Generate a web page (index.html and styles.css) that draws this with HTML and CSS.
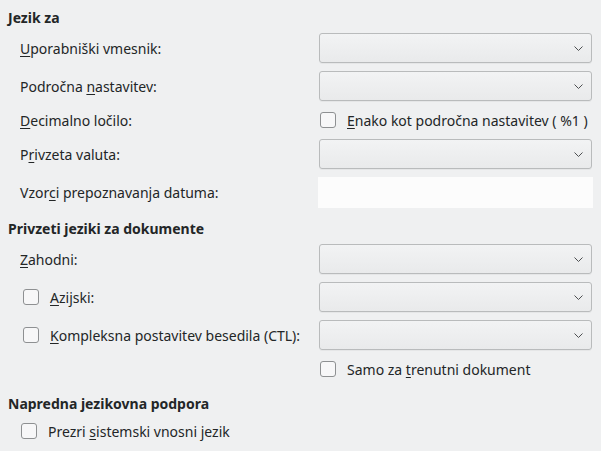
FILE: index.html
```html
<!DOCTYPE html>
<html lang="sl">
<head>
<meta charset="utf-8">
<link rel="stylesheet" href="styles.css">
</head>
<body>
<div class="page">
  <section class="section first">
    <h2 class="head">Jezik za</h2>
    <div class="grid">
      <div class="label"><span><u>U</u>porabniški vmesnik:</span></div>
      <div class="combo"><svg class="chev" width="9" height="5" viewBox="0 0 9 5"><polyline points="0.5,0.5 4.5,4.5 8.5,0.5" fill="none" stroke="#4d4f51" stroke-width="1"/></svg></div>

      <div class="label"><span>Področna <u>n</u>astavitev:</span></div>
      <div class="combo"><svg class="chev" width="9" height="5" viewBox="0 0 9 5"><polyline points="0.5,0.5 4.5,4.5 8.5,0.5" fill="none" stroke="#4d4f51" stroke-width="1"/></svg></div>

      <div class="label short"><span><u>D</u>ecimalno ločilo:</span></div>
      <label class="check short"><span class="box"></span><span><u>E</u>nako kot področna nastavitev ( %1 )</span></label>

      <div class="label"><span>P<u>r</u>ivzeta valuta:</span></div>
      <div class="combo"><svg class="chev" width="9" height="5" viewBox="0 0 9 5"><polyline points="0.5,0.5 4.5,4.5 8.5,0.5" fill="none" stroke="#4d4f51" stroke-width="1"/></svg></div>

      <div class="label tall"><span>Vzor<u>c</u>i prepoznavanja datuma:</span></div>
      <div class="field"></div>
    </div>
  </section>

  <section class="section">
    <h2 class="head">Privzeti jeziki za dokumente</h2>
    <div class="grid">
      <div class="label"><span><u>Z</u>ahodni:</span></div>
      <div class="combo"><svg class="chev" width="9" height="5" viewBox="0 0 9 5"><polyline points="0.5,0.5 4.5,4.5 8.5,0.5" fill="none" stroke="#4d4f51" stroke-width="1"/></svg></div>

      <label class="check lcheck"><span class="box"></span><span><u>A</u>zijski:</span></label>
      <div class="combo"><svg class="chev" width="9" height="5" viewBox="0 0 9 5"><polyline points="0.5,0.5 4.5,4.5 8.5,0.5" fill="none" stroke="#4d4f51" stroke-width="1"/></svg></div>

      <label class="check lcheck"><span class="box"></span><span><u>K</u>ompleksna postavitev besedila (CTL):</span></label>
      <div class="combo"><svg class="chev" width="9" height="5" viewBox="0 0 9 5"><polyline points="0.5,0.5 4.5,4.5 8.5,0.5" fill="none" stroke="#4d4f51" stroke-width="1"/></svg></div>

      <div class="label short"></div>
      <label class="check short"><span class="box"></span><span>Samo za <u>t</u>renutni dokument</span></label>
    </div>
  </section>

  <section class="section last">
    <h2 class="head">Napredna jezikovna podpora</h2>
    <div class="grid single">
      <label class="check lcheck short"><span class="box"></span><span>Prezri <u>s</u>istemski vnosni jezik</span></label>
    </div>
  </section>
</div>
</body>
</html>
```

FILE: styles.css
```css
html, body {
  margin: 0;
  padding: 0;
  background: #eff0f1;
}

body {
  font-family: "Noto Sans", "DejaVu Sans", sans-serif;
  font-size: 14px;
  color: #232627;
  width: 601px;
  height: 451px;
  overflow: hidden;
}

.page {
  padding: 8px 9px 0 8px;
}

.section {
  margin-top: 11px;
}

.section.first {
  margin-top: 0;
}

.section.last {
  margin-top: 14px;
}

.head {
  font-size: 14px;
  font-weight: 700;
  line-height: 20px;
  margin: 0 0 5px 0;
}

.section.last .head {
  margin-bottom: 6px;
}

.grid {
  display: grid;
  grid-template-columns: 1fr 273px;
  row-gap: 8px;
  padding-left: 12px;
  align-items: center;
}

.grid.single {
  grid-template-columns: 1fr;
}

.label {
  height: 30px;
  display: flex;
  align-items: center;
  white-space: nowrap;
}

.label.short {
  height: 22px;
}

.label.tall {
  height: 31px;
}

u {
  text-decoration: underline;
  text-decoration-thickness: 1px;
  text-underline-offset: 2px;
}

.combo {
  height: 28px;
  border: 1px solid #b9bbbc;
  border-radius: 3px;
  background: linear-gradient(#f2f3f4, #e9eaeb);
  box-shadow: 0 1px 0 rgba(0, 0, 0, 0.04);
  display: flex;
  align-items: center;
  justify-content: flex-end;
  padding-right: 8px;
}

.chev {
  display: block;
}

.field {
  height: 31px;
  background: #fcfcfc;
  margin: 0 -1px;
}

.check {
  display: flex;
  align-items: center;
  height: 22px;
  white-space: nowrap;
}

.check .box {
  width: 14px;
  height: 14px;
  border: 1px solid #8e9092;
  border-radius: 3px;
  background: #f7f7f8;
  margin-right: 11px;
  flex: none;
}

.check.short .box {
  margin-left: 1px;
}

.lcheck {
  height: 30px;
}

.lcheck .box {
  margin-left: 3px;
}

.lcheck.short {
  height: 22px;
}
```
